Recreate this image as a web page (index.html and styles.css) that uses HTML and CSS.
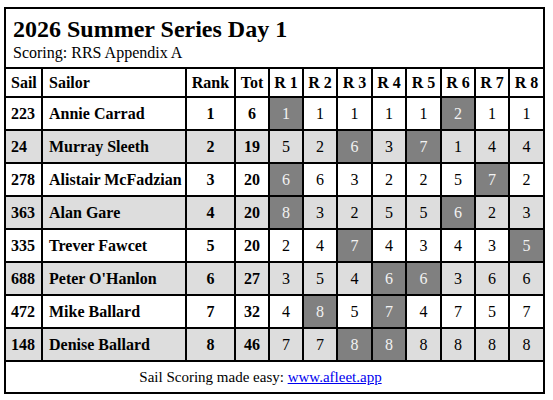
FILE: index.html
```html
<!DOCTYPE html>
<html lang="en">
<head>
<meta charset="utf-8">
<title>2026 Summer Series Day 1</title>
<link rel="stylesheet" href="styles.css">
</head>
<body>
<div class="card">
  <div class="head">
    <h1 class="title">2026 Summer Series Day 1</h1>
    <p class="sub">Scoring: RRS Appendix A</p>
  </div>
  <div class="grid">
    <div class="c th first left">Sail</div>
    <div class="c th left">Sailor</div>
    <div class="c th">Rank</div>
    <div class="c th">Tot</div>
    <div class="c th">R 1</div>
    <div class="c th">R 2</div>
    <div class="c th">R 3</div>
    <div class="c th">R 4</div>
    <div class="c th">R 5</div>
    <div class="c th">R 6</div>
    <div class="c th">R 7</div>
    <div class="c th">R 8</div>

    <div class="c b first left">223</div>
    <div class="c b left">Annie Carrad</div>
    <div class="c b">1</div>
    <div class="c b">6</div>
    <div class="c d">1</div>
    <div class="c">1</div>
    <div class="c">1</div>
    <div class="c">1</div>
    <div class="c">1</div>
    <div class="c d">2</div>
    <div class="c">1</div>
    <div class="c">1</div>

    <div class="c g b first left">24</div>
    <div class="c g b left">Murray Sleeth</div>
    <div class="c g b">2</div>
    <div class="c g b">19</div>
    <div class="c g">5</div>
    <div class="c g">2</div>
    <div class="c d">6</div>
    <div class="c g">3</div>
    <div class="c d">7</div>
    <div class="c g">1</div>
    <div class="c g">4</div>
    <div class="c g">4</div>

    <div class="c b first left">278</div>
    <div class="c b left">Alistair McFadzian</div>
    <div class="c b">3</div>
    <div class="c b">20</div>
    <div class="c d">6</div>
    <div class="c">6</div>
    <div class="c">3</div>
    <div class="c">2</div>
    <div class="c">2</div>
    <div class="c">5</div>
    <div class="c d">7</div>
    <div class="c">2</div>

    <div class="c g b first left">363</div>
    <div class="c g b left">Alan Gare</div>
    <div class="c g b">4</div>
    <div class="c g b">20</div>
    <div class="c d">8</div>
    <div class="c g">3</div>
    <div class="c g">2</div>
    <div class="c g">5</div>
    <div class="c g">5</div>
    <div class="c d">6</div>
    <div class="c g">2</div>
    <div class="c g">3</div>

    <div class="c b first left">335</div>
    <div class="c b left">Trever Fawcet</div>
    <div class="c b">5</div>
    <div class="c b">20</div>
    <div class="c">2</div>
    <div class="c">4</div>
    <div class="c d">7</div>
    <div class="c">4</div>
    <div class="c">3</div>
    <div class="c">4</div>
    <div class="c">3</div>
    <div class="c d">5</div>

    <div class="c g b first left">688</div>
    <div class="c g b left">Peter O'Hanlon</div>
    <div class="c g b">6</div>
    <div class="c g b">27</div>
    <div class="c g">3</div>
    <div class="c g">5</div>
    <div class="c g">4</div>
    <div class="c d">6</div>
    <div class="c d">6</div>
    <div class="c g">3</div>
    <div class="c g">6</div>
    <div class="c g">6</div>

    <div class="c b first left">472</div>
    <div class="c b left">Mike Ballard</div>
    <div class="c b">7</div>
    <div class="c b">32</div>
    <div class="c">4</div>
    <div class="c d">8</div>
    <div class="c">5</div>
    <div class="c d">7</div>
    <div class="c">4</div>
    <div class="c">7</div>
    <div class="c">5</div>
    <div class="c">7</div>

    <div class="c g b first left">148</div>
    <div class="c g b left">Denise Ballard</div>
    <div class="c g b">8</div>
    <div class="c g b">46</div>
    <div class="c g">7</div>
    <div class="c g">7</div>
    <div class="c d">8</div>
    <div class="c d">8</div>
    <div class="c g">8</div>
    <div class="c g">8</div>
    <div class="c g">8</div>
    <div class="c g">8</div>
  </div>
  <div class="foot">Sail Scoring made easy: <a href="#">www.afleet.app</a></div>
</div>
</body>
</html>
```

FILE: styles.css
```css
body {
  margin: 0;
  background: #fff;
  font-family: "Liberation Serif", "Times New Roman", serif;
  color: #000;
}

.card {
  margin: 7px 0 0 4px;
  width: 541px;
  box-sizing: border-box;
  border: 2px solid #000;
}

.head {
  height: 58px;
  box-sizing: border-box;
  padding: 7px 0 0 7px;
}

.title {
  margin: 0;
  font-size: 24px;
  line-height: 26px;
  font-weight: bold;
}

.sub {
  margin: 2px 0 0;
  font-size: 16px;
  line-height: 18px;
}

.grid {
  display: grid;
  grid-template-columns: 35px 144px 49px 34px 34px 34px 35px 34px 35px 34px 34px 35px;
  grid-template-rows: 29px repeat(8, 33px);
}

.c {
  box-sizing: border-box;
  border-top: 2px solid #000;
  border-left: 2px solid #000;
  display: flex;
  align-items: center;
  justify-content: center;
  font-size: 16px;
  white-space: nowrap;
}

.c.first {
  border-left: 0;
  padding-left: 5px;
}

.c.left {
  justify-content: flex-start;
  padding-left: 6px;
}

.c.first.left {
  padding-left: 5px;
}

.th,
.b {
  font-weight: bold;
}

.g {
  background: #dddddd;
}

.d {
  background: #808080;
  color: #f2f2f2;
}

.foot {
  border-top: 2px solid #000;
  height: 30px;
  line-height: 30px;
  text-align: center;
  padding-right: 28px;
  font-size: 15px;
}

.foot a {
  color: #0000ee;
  text-decoration: underline;
}
```
